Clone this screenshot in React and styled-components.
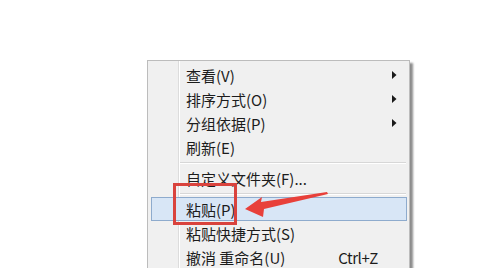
import React from 'react';
import styled, { createGlobalStyle } from 'styled-components';

const GlobalStyle = createGlobalStyle`
  html, body {
    margin: 0;
    background: #ffffff;
    overflow: hidden;
  }
`;

const items = [
  { label: '查看(V)', sub: true },
  { label: '排序方式(O)', sub: true },
  { label: '分组依据(P)', sub: true },
  { label: '刷新(E)' },
  { sep: true },
  { label: '自定义文件夹(F)...' },
  { sep: true },
  { label: '粘贴(P)', active: true },
  { label: '粘贴快捷方式(S)' },
  { label: '撤消 重命名(U)', hint: 'Ctrl+Z' },
];

function App() {
  return (
    <Page>
      <GlobalStyle />
      <Menu>
        {items.map((it, i) =>
          it.sep ? (
            <Separator key={i} />
          ) : (
            <Item key={i} $active={it.active}>
              <Label>{it.label}</Label>
              {it.hint && <Hint>{it.hint}</Hint>}
              {it.sub && (
                <SubArrow width="5" height="8" viewBox="0 0 5 8">
                  <polygon points="0,0 4.5,4 0,8" fill="#1a1a1a" />
                </SubArrow>
              )}
            </Item>
          )
        )}
        <RedBox />
        <Pointer width="100" height="40" viewBox="0 0 100 40">
          <polygon
            points="0,28 17,16 16,21 82,11 83,13 19,28 18,36"
            fill="#e8403a"
          />
        </Pointer>
      </Menu>
    </Page>
  );
}

const Page = styled.div`
  padding: 60px 0 0 147px;
  height: 268px;
  box-sizing: border-box;
`;

const Menu = styled.div`
  position: relative;
  width: 263px;
  box-sizing: border-box;
  border: 1px solid #bcbcbc;
  padding: 2px 0 0;
  background:
    linear-gradient(to right,
      transparent 30px, #dcdcdc 30px, #dcdcdc 31px,
      #ffffff 31px, #ffffff 32px, transparent 32px),
    #f0f0f0;
  box-shadow: 3px 3px 2px rgba(0, 0, 0, 0.45);
  font-family: "Noto Sans CJK SC", "Noto Sans", sans-serif;
  font-size: 15px;
  color: #1c1c1c;
`;

const Item = styled.div`
  display: flex;
  align-items: center;
  height: 24px;
  margin: 0 2px 0 3px;
  padding: 0 9px 0 34px;
  box-sizing: border-box;
  border: 1px solid ${p => (p.$active ? '#8eabcd' : 'transparent')};
  background: ${p => (p.$active ? '#d8e6f6' : 'transparent')};
`;

const Label = styled.span`
  flex: 1;
  white-space: nowrap;
  line-height: 1;
`;

const Hint = styled.span`
  margin-right: 19px;
  white-space: nowrap;
  line-height: 1;
  letter-spacing: -0.4px;
`;

const SubArrow = styled.svg`
  flex: none;
  display: block;
`;

const Separator = styled.div`
  height: 7px;
  margin-left: 32px;
  margin-right: 3px;
  background: linear-gradient(to bottom,
    transparent 3px, #d7d7d7 3px, #d7d7d7 4px, #ffffff 4px, #ffffff 5px, transparent 5px);
`;

const RedBox = styled.div`
  position: absolute;
  left: 25px;
  top: 122px;
  width: 64px;
  height: 42px;
  box-sizing: border-box;
  border: 3px solid #d9433d;
`;

const Pointer = styled.svg`
  position: absolute;
  left: 97px;
  top: 120px;
`;

export default App;
